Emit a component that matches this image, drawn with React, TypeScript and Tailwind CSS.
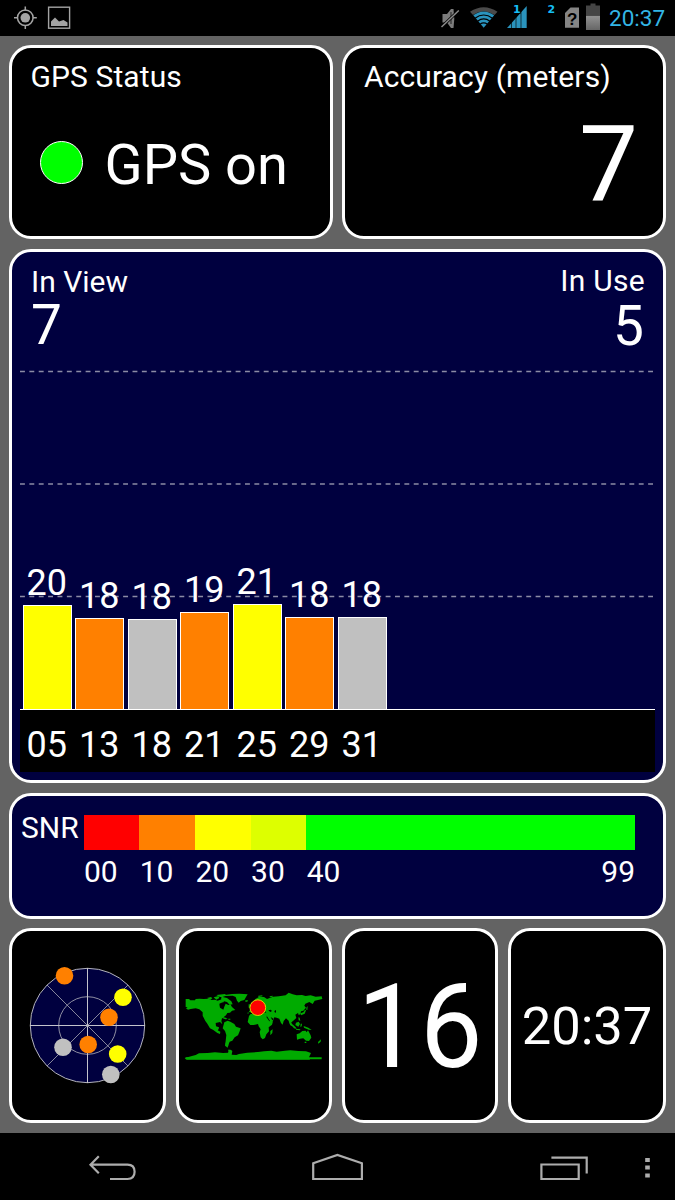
import type { ReactNode } from 'react';

const YELLOW = '#ffff00';
const ORANGE = '#ff8000';
const GREY = '#c0c0c0';

const satellites = [
  { id: '05', snr: 20, height: 104, color: YELLOW },
  { id: '13', snr: 18, height: 91.5, color: ORANGE },
  { id: '18', snr: 18, height: 90.5, color: GREY },
  { id: '21', snr: 19, height: 97.5, color: ORANGE },
  { id: '25', snr: 21, height: 105, color: YELLOW },
  { id: '29', snr: 18, height: 92.5, color: ORANGE },
  { id: '31', snr: 18, height: 92.5, color: GREY },
];

const skyDots = [
  { x: 54.5, y: 45.7, color: ORANGE },
  { x: 113, y: 67.3, color: YELLOW },
  { x: 99, y: 87.3, color: ORANGE },
  { x: 78.2, y: 114.5, color: ORANGE },
  { x: 53, y: 117.3, color: GREY },
  { x: 107.7, y: 124, color: YELLOW },
  { x: 100.8, y: 144.5, color: GREY },
];

function Panel({ className, children }: { className: string; children: ReactNode }) {
  return (
    <section className={`box-border rounded-[22px] border-[3px] border-white ${className}`}>
      {children}
    </section>
  );
}

function StatusBar() {
  return (
    <header className="flex h-[36px] items-start justify-between bg-black">
      <svg width="80" height="36" viewBox="0 0 80 36" fill="none" stroke="#a3a3a3">
        <circle cx="25.3" cy="17.8" r="7.8" strokeWidth="1.5" />
        <circle cx="25.3" cy="17.8" r="4.8" fill="#a3a3a3" stroke="none" />
        <path d="M25.3 6.5v4M25.3 25v4M14 17.8h4M32.8 17.8h4" strokeWidth="1.5" />
        <rect x="48.6" y="7.2" width="21" height="21" strokeWidth="1.4" />
        <path d="M51 26v-4.500l4-4 4 4 4.500-1.500 4 2.500V26z" fill="#a3a3a3" stroke="none" />
      </svg>
      <div className="flex">
        <svg width="170" height="36" viewBox="437 0 170 36" fill="none">
          <path d="M442.500 14h4.500l4-5h2.500q1.500 9.500 0 19H451l-4-5.500h-4.500z" fill="#7c7c7c" />
          <path d="M451 12v12" stroke="#222" strokeWidth="1" />
          <path d="M441.500 27L458.800 10.500" stroke="#000" strokeWidth="3" />
          <path d="M441.500 27L458.800 10.500" stroke="#8c8c8c" strokeWidth="1.500" />
          <path d="M470 11.800Q483.700 2.500 497.500 11.800L494.500 15Q483.700 7.700 473 15z" fill="#4a4a4a" />
          <path d="M473.300 15.300Q483.700 7.700 494.200 15.300L483.700 27.700z" fill="#2a93bd" />
          <path d="M475 18.200Q483.700 11.800 492.500 18.200M477.500 21.200Q483.700 16.500 490 21.200M480 24.200Q483.700 21.500 487.500 24.200" stroke="#000" strokeWidth="1.100" />
          <path d="M507 28L526.700 6v22z" fill="#2a93bd" />
          <path d="M511.500 20v8M516 14v14M521 10v18" stroke="#000" strokeOpacity="0.650" strokeWidth="1" />
          <rect x="512" y="3" width="8.500" height="11" fill="#000" />
          <path d="M565 13l5.500-5.500H579V27.700h-14z" fill="#858585" />
          <path d="M590.500 3.500h5v2h4.500v9.500h-14V5.500h4.500z" fill="#454545" />
          <path d="M586 15.500h14v14.500h-14z" fill="url(#charge)" />
          <text x="513" y="13" fontSize="11" fontWeight="700" fill="#15bdf4" fontFamily="DejaVu Sans">1</text>
          <text x="547.500" y="13" fontSize="11" fontWeight="700" fill="#15bdf4" fontFamily="DejaVu Sans">2</text>
          <text x="567" y="24.500" fontSize="17" fontWeight="700" fill="#000" fontFamily="Liberation Sans">?</text>
          <defs>
            <linearGradient id="charge" x1="0" x2="0" y1="0" y2="1">
              <stop stopColor="#939393" />
              <stop offset="1" stopColor="#666" />
            </linearGradient>
          </defs>
        </svg>
        <time className="w-[68px] pl-[2px] pt-[7px] text-[22.500px] leading-[23px] text-[#33b5e5]">20:37</time>
      </div>
    </header>
  );
}

function SatelliteChart() {
  return (
    <Panel className="mt-[10px] flex h-[534px] flex-col bg-[#00003f]">
      <div className="flex justify-between pl-[19px] pr-[18px] pt-[14px] text-[30px] leading-[30px]">
        <div>
          <div className="pt-[1px]">In View</div>
          <div className="pt-[1px] text-[55px] leading-[55px]">7</div>
        </div>
        <div className="text-right">
          <div className="tracking-[0.3px]">In Use</div>
          <div className="pr-[1px] pt-[3px] text-[55px] leading-[55px]">5</div>
        </div>
      </div>
      <div className="relative mx-[8px] mt-auto mb-[8px]">
        <svg className="absolute bottom-[62px] left-0" width="635" height="340" viewBox="0 0 635 340">
          <path d="M0 1.500H633M0 114H633M0 226.500H633" stroke="#8b8ba5" strokeWidth="1.300" strokeDasharray="4.900 4.475" />
        </svg>
        <div className="relative flex items-end gap-[3.500px] border-b-[1.500px] border-white pl-[2.500px]">
          {satellites.map((s) => (
            <div key={s.id} className="w-[49px]">
              <div className="pb-[2px] pl-[4px] text-[36px] leading-[40px]">{s.snr}</div>
              <div className="border border-b-0 border-white" style={{ height: s.height, backgroundColor: s.color }} />
            </div>
          ))}
        </div>
        <div className="flex h-[62px] gap-[3.500px] bg-black pl-[2.500px] pt-[17px] text-[36px] leading-[36px]">
          {satellites.map((s) => (
            <div key={s.id} className="w-[49px] pl-[4px]">{s.id}</div>
          ))}
        </div>
      </div>
    </Panel>
  );
}

function SnrScale() {
  return (
    <Panel className="mt-[10px] h-[126px] bg-[#00003f] text-[30px] leading-[30px]">
      <div className="flex pt-[19px]">
        <div className="-mt-[2px] w-[71.500px] pl-[9px]">SNR</div>
        <div className="flex h-[35px] w-[551px]">
          <div className="w-[55.700px] bg-[#ff0000]" />
          <div className="w-[55.700px] bg-[#ff8000]" />
          <div className="w-[55.700px] bg-[#ffff00]" />
          <div className="w-[55.700px] bg-[#ddff00]" />
          <div className="grow bg-[#00ff00]" />
        </div>
      </div>
      <div className="ml-[72px] mt-[7px] flex w-[551px]">
        <span className="w-[55.700px]">00</span>
        <span className="w-[55.700px]">10</span>
        <span className="w-[55.700px]">20</span>
        <span className="w-[55.700px]">30</span>
        <span>40</span>
        <span className="ml-auto">99</span>
      </div>
    </Panel>
  );
}

function SkyView() {
  return (
    <svg width="151" height="189" viewBox="2 1 151 189" fill="none">
      <circle cx="77.500" cy="95.500" r="57.200" fill="#00003f" stroke="#b4b4bc" />
      <circle cx="77.500" cy="95.500" r="28.800" stroke="#b4b4bc" strokeWidth="0.800" />
      <path d="M77.500 38v115M20 95.500h115" stroke="#c4c4cc" />
      <path d="M37 55l81 81M37 136l81-81" stroke="#a8a8b4" strokeWidth="0.800" />
      {skyDots.map((d, i) => (
        <circle key={i} cx={d.x} cy={d.y} r="8.800" fill={d.color} />
      ))}
    </svg>
  );
}

function WorldMap() {
  return (
    <svg width="160" height="110" viewBox="0 0 480 330">
      <g fill="#00ab00">
        <path d="M32 87h10l4 4h14l2-4 12-1 12 1 14-1 10 4 10-1 8 3 12-4 8 4-5 8-10 3 2 10 10 6 3-9 4-9 8 4 6-2 5 8 10 9-10 2-6 6-8 1-4 7-12 9-2 8 3 10-7-7-13 3 1 10 9 3-1 5-3 4 8 4-1 7-8-3-12-9-10-5-8-14-6-8-8-16v-10l-10-9-11-3-15 2-8 2-6-4 5-4H32z" />
        <path d="M96 84l12-3 4 4-6 4zM116 82l14-4 3 6-9 5zM124 75l26-3 4 5-14 5-7-2zM140 80l16 4 13 10 4 9-9 1-8-8-12-3-6-5zM149 75l22-3 22-1 25 2-5 8-5 9-11 3-6 5-5-6-4-11-9-4-22 1zM211 91l8 0-2 4-6 0zM140 140l12 3 6 4-7 1-12-5zM160 146h6v3h-6z" />
        <path d="M148 157l10-5 8 3 12 7 5 8 14 5-3 9-5 12-10 6-7 10-8 3-4 10-2 8-8-6 2-14 2-18-4-12-7-8z" />
        <path d="M152 218l8 5v4l-8-2zM161 238l8 4-5 9h-5z" />
        <path d="M220 131l3-9 9-1 4-9-5-8-4-5 8-3 5-8 13-8 14 1 9 6 8-3 10-4 18-1 10-2 10-1 9-8 12 5 12 3 16-1 11 3 15-2 15 4 18-1 2 8-13 3-10 2-6 10-10-6-12 5-3 6 5 6-8 9-7 2-2 9-5 2-2-6-8 5 3 10-10 9-5 4 3 12-6-3-3-6-2-8-8-7-7 8-3 11-5-5-5-13-8-3-7-1-4 10-9 7-8-16-2-8-13-1-5-7-7 8-8-5-10-1-8-3-8 3z" />
        <path d="M222 138l5-6 17-1 12 3 15-1 8 5 5 15 10 1-3 10-10 8 1 12-8 9-4 11-7 4-6-6-3-15 3-9-6-9-2-7-13 3-10 0-8-9z" />
        <path d="M286 183l7-5-1 11-6 7zM221 103h4v10h-4zM250 77l12-1v3l-12 2zM284 79l9-2v3l-9 2zM309 82l12-3v4l-12 2z" />
        <path d="M346 158l8 6 8 8 3 5-8-2-12-14zM363 158l8-3 4 7-5 8-9-5zM370 142l4 1 2 9-5-1zM377 161l4 0-1 8-4 2zM386 168l14 5 10 7-9-1-14-6zM363 176l13 2-1 3-12-2zM376 130l9-3 5-8 3 2-4 10-11 5zM394 113l4-5-1 12-3-1z" />
        <path d="M365 193l9-3 8-7 10-1 3 5 4-6 8 15 2 7-7 10-9-1-8-7-10 1-9 3zM389 215h5v4h-5zM429 216l9-8-1 7-7 6z" />
        <path d="M62 255l10-5 26-1 22-2 24 2 16-1 4-4-6-3 9-2 5 4-2 11 14 1 8-3 25-4 32-2 18-2 22-2 16 3 25-3 16-1 24 2 23 1 15 5-6 13 3 7-370 0-6-5z" />
        <path d="M32 262h408v6H32z" />
      </g>
      <path d="M262 123l8 1 4 5-7-2zM280 121l7-2 4 4-5 3zM298 123l5-3v8l-4-1zM276 139l9 14-2 1-9-13zM287 141l9 6-4 4zM133 101l10-4 6 7-8 5z" fill="#000" />
      <circle cx="248.500" cy="113" r="23.500" fill="#ff0000" stroke="#d9d900" strokeWidth="3" />
    </svg>
  );
}

function NavigationBar() {
  return (
    <nav className="h-[67px] bg-black">
      <svg width="675" height="67" viewBox="0 1133 675 67" fill="none" stroke="#adadad" strokeWidth="2.200">
        <path d="M91 1164.700H127.500Q134.600 1164.700 134.600 1171.800T127.500 1179H110M98.800 1156.300L90.500 1164.700L98.800 1173.200" />
        <path d="M313.200 1179V1163.300L337.400 1154.900L361.900 1163.300V1179z" />
        <path d="M541.400 1164.500H578.700V1179H541.400zM551.400 1157.700H586.700V1173.500" />
        <path d="M647.500 1158V1162M647.500 1165.500V1169.500M647.500 1173.500V1177.500" strokeWidth="4.600" />
      </svg>
    </nav>
  );
}

export default function App() {
  return (
    <div className="flex h-[1200px] w-[675px] flex-col overflow-hidden bg-[#636363] font-['Roboto',sans-serif] text-white">
      <StatusBar />
      <main className="h-[1097px] px-[9px] pt-[9px]">
        <div className="grid grid-cols-2 gap-[9px]">
          <Panel className="h-[194px] bg-black">
            <h1 className="pl-[18.500px] pt-[14px] text-[30px] leading-[30px] tracking-[0.1px]">GPS Status</h1>
            <div className="flex items-center gap-[21.500px] pl-[28px] pt-[45px]">
              <span className="mb-[5px] size-[43px] rounded-full border-[1.500px] border-white bg-[#00ff00]" />
              <span className="text-[56px] leading-[56px]">GPS on</span>
            </div>
          </Panel>
          <Panel className="h-[194px] bg-black">
            <h2 className="pl-[19px] pt-[14px] text-[30px] leading-[30px] tracking-[0.1px]">Accuracy (meters)</h2>
            <div className="pr-[25px] pt-[20px] text-right text-[105px] leading-[105px]">7</div>
          </Panel>
        </div>
        <SatelliteChart />
        <SnrScale />
        <div className="mt-[9px] grid grid-cols-[157px_156px_156px_158px] gap-[10px]">
          <Panel className="h-[195px] overflow-hidden bg-black"><SkyView /></Panel>
          <Panel className="flex h-[195px] justify-center overflow-hidden bg-black pl-[2px] pt-[39px]">
            <div className="w-[160px] shrink-0"><WorldMap /></div>
          </Panel>
          <Panel className="h-[195px] bg-black">
            <div className="scale-x-[0.95] pt-[38px] text-center text-[117px] leading-[117px]">16</div>
          </Panel>
          <Panel className="h-[195px] bg-black">
            <div className="pt-[69px] text-center text-[52.500px] leading-[53px]">20:37</div>
          </Panel>
        </div>
      </main>
      <NavigationBar />
    </div>
  );
}
